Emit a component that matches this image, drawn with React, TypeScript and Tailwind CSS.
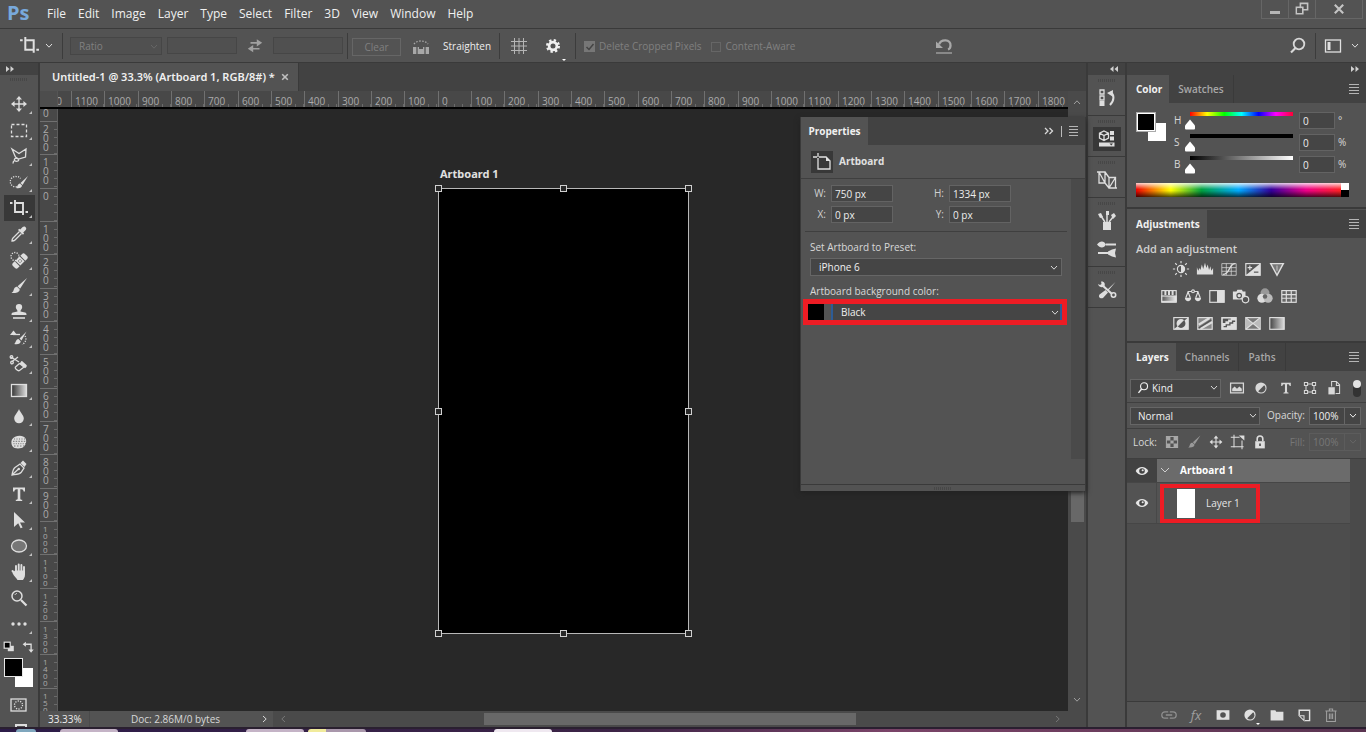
import type { ReactNode } from 'react'

const MENUS = ['File', 'Edit', 'Image', 'Layer', 'Type', 'Select', 'Filter', '3D', 'View', 'Window', 'Help']

function Icon({ children, size = 20, className = '' }: { children: ReactNode; size?: number; className?: string }) {
  return (
    <svg
      width={size}
      height={size}
      viewBox="0 0 20 20"
      fill="none"
      stroke="currentColor"
      strokeWidth="1.3"
      className={`shrink-0 ${className}`}
      aria-hidden="true"
    >
      {children}
    </svg>
  )
}

const solid = { fill: 'currentColor', stroke: 'none' }

const Chevron = ({ className = '' }: { className?: string }) => (
  <svg width="8" height="6" viewBox="0 0 8 6" fill="none" stroke="currentColor" className={`shrink-0 ${className}`} aria-hidden="true">
    <path d="M1 1l3 3.2L7 1" />
  </svg>
)

const moveShape = (
  <>
    <path d="M10 4v12M4 10h12" strokeWidth="1.4" />
    <path d="M10 2l3 3.6H7zM10 18l3-3.6H7zM2 10l3.6-3v6zM18 10l-3.6-3v6z" {...solid} />
  </>
)

const cropShape = (
  <>
    <path d="M6 2v12h8.500M7 5h7v12" strokeWidth="1.900" />
    <path d="M1 5h2.500M16.500 14H19" strokeWidth="1.900" />
  </>
)

const brushShape = (
  <>
    <path d="M18 2L8.600 10.300l2.400 2.500z" {...solid} />
    <path d="M8.200 10.800l2.500 2.600c0 2.400-3.500 4.200-8.200 3.300 2-.8 1.800-2.200 2.600-4 .6-1.300 1.900-1.900 3.100-1.900z" {...solid} />
  </>
)

const artboardShape = (
  <>
    <path d="M6 1v4M1 5h4M6 6v11h12V9l-4-4H7" />
    <path d="M14 4.500V9h4.500z" {...solid} />
  </>
)

const typeShape = (
  <path d="M4 3.500h12v4h-1.400c-.2-1.600-.8-2.300-2.300-2.300h-1v9.300c0 1 .5 1.200 1.900 1.300V17H6.800v-1.200c1.400-.1 1.900-.3 1.900-1.300V5.200h-1c-1.500 0-2.100.7-2.300 2.300H4z" {...solid} />
)

const TOOLS: { name: string; draw: ReactNode; flyout?: boolean }[] = [
  { name: 'Move', draw: moveShape },
  { name: 'Rectangular Marquee', draw: <rect x="2.500" y="4.500" width="15" height="12" strokeDasharray="3 2" /> },
  {
    name: 'Polygonal Lasso',
    draw: <path d="M3 3l7 4.500 7-4.500-.5 8-7 2-3-2zM9.500 13.500c-1-2-5-1-4 .8s5 .8 4-.8M5.500 14.500c-1 .5-1.500 1.500-1.500 3" />,
  },
  {
    name: 'Quick Selection',
    draw: (
      <>
        <path d="M10 13.500A5.200 5.200 0 117 4.500c2 0 3.500.5 4.500 2" strokeDasharray="1.200 1.300" />
        <path d="M19 4l-7.500 7 2 2z" {...solid} />
        <path d="M11 11.500l2 2c0 2-2.500 3.300-6 2.500 1.800-1 1.200-4 4-4.500z" {...solid} />
      </>
    ),
  },
  { name: 'Crop', draw: cropShape },
  {
    name: 'Eyedropper',
    draw: (
      <>
        <path d="M10.500 7.500L4 14c-.8.8-1 2-1 3 1 0 2.200-.2 3-1l6.500-6.500" />
        <path d="M9 6l1.200-1.200 1 .8 2.500-2.600c1.800-1.700 4.800.9 3 2.900l-2.500 2.600.9 1L14 10.800z" {...solid} />
      </>
    ),
  },
  {
    name: 'Spot Healing Brush',
    draw: (
      <>
        <circle cx="6" cy="6.500" r="4" strokeDasharray="1.200 1.300" />
        <g transform="rotate(-45 11 11)">
          <path d="M4.500 7.500H7v7H4.500a2 2 0 01-2-2v-3a2 2 0 012-2zM15 7.500h2.500a2 2 0 012 2v3a2 2 0 01-2 2H15z" {...solid} />
          <rect x="8" y="7.500" width="6" height="7" {...solid} />
          <path d="M9.500 9.500h1v1h-1zM11.500 9.500h1v1h-1zM9.500 11.500h1v1h-1zM11.500 11.500h1v1h-1z" fill="#535353" stroke="none" />
        </g>
      </>
    ),
  },
  { name: 'Brush', draw: brushShape },
  {
    name: 'Clone Stamp',
    draw: (
      <>
        <path d="M8.500 9.500c.3-1.200-1.700-2.300-1.700-4.200a3.200 3.200 0 016.400 0c0 1.900-2 3-1.700 4.200l4.500 1c1.200.3 1.500 1 1.500 2.500h-15c0-1.500.3-2.200 1.500-2.500z" {...solid} />
        <path d="M4 16h12" strokeWidth="1.600" />
      </>
    ),
  },
  {
    name: 'History Brush',
    draw: (
      <>
        <path d="M17.500 3.500l-7 7 2 2zM9.500 11l2.200 2.300c0 2.200-2.700 3.500-6.500 2.700 1.800-1 1.300-4.500 4.300-5z" {...solid} />
        <path d="M1 7h7L4.500 2.500z" {...solid} />
        <path d="M4 6.500h7" />
        <path d="M16 8c2 3 .5 7-3 8.500" strokeDasharray="1.200 1.300" />
      </>
    ),
  },
  {
    name: 'Background Eraser',
    draw: (
      <>
        <path d="M2 3l8 5M2.500 8L9 3" />
        <circle cx="2.500" cy="3" r="1.300" />
        <circle cx="3" cy="8.500" r="1.300" />
        <path d="M13 7l4.500 4c1 1-1 3-1.500 3.300l-5-4.500c-.5-.5 1.500-3 2-2.800z" {...solid} />
        <path d="M10.500 9.500L6.500 13c-1.200 1.200 2.500 4.500 4 3.500l4.500-3.500z" />
      </>
    ),
  },
  {
    name: 'Gradient',
    draw: (
      <>
        <defs>
          <linearGradient id="tool-gradient">
            <stop stopColor="#333" />
            <stop offset="1" stopColor="#ddd" />
          </linearGradient>
        </defs>
        <rect x="2.500" y="4.500" width="15" height="12" fill="url(#tool-gradient)" />
      </>
    ),
  },
  { name: 'Blur', draw: <path d="M10 3c1 3.200 4.800 6.200 4.800 9.500a4.800 4.800 0 01-9.600 0C5.200 9.200 9 6.200 10 3z" {...solid} /> },
  {
    name: 'Sponge',
    draw: (
      <>
        <path d="M3 7.500C5 3.500 14 2 16.500 6.500c1.800 3 0 8.500-4 9.500-3 .8-7.500.8-9.200-2-1-1.700-1.300-4.500-.3-6.500z" {...solid} />
        <g stroke="#6a6a6a" strokeWidth=".9">
          <path d="M5 7h11" strokeDasharray="1 1.500" />
          <path d="M4 9.300h13" strokeDasharray="1.500 1.200" />
          <path d="M4.500 11.700h13" strokeDasharray="1 1.300" />
          <path d="M5 14h11" strokeDasharray="1.500 1.500" />
        </g>
      </>
    ),
  },
  {
    name: 'Pen',
    draw: (
      <>
        <path d="M3 17c.5-3 1-6 3-7.500L11 6l4 4-3 4.500c-1.500 2-6 2-9 2.500zM3 17l6.500-6" />
        <path d="M11.500 5L14 2.500 17.500 6 15.500 9z" {...solid} />
        <circle cx="9.800" cy="11" r="1.200" {...solid} />
      </>
    ),
  },
  { name: 'Horizontal Type', draw: typeShape },
  { name: 'Path Selection', draw: <path d="M5 2l11 10.500h-5l2.600 5-2 .8-2.400-5L5 17z" {...solid} /> },
  { name: 'Ellipse', draw: <ellipse cx="10" cy="10" rx="7.500" ry="6" fill="#777" /> },
  {
    name: 'Hand',
    draw: (
      <>
        <path d="M7 9V4M9.700 9V2.500M12.400 9V3M15 10V5M7 13l-3.500-4" strokeWidth="1.900" strokeLinecap="round" />
        <path d="M6 8.500h10v4c0 3-1.200 4-2 5.500H8.500c-1-2-3.500-3.500-5-7z" {...solid} />
      </>
    ),
  },
  {
    name: 'Zoom',
    draw: (
      <>
        <circle cx="8" cy="8" r="5" strokeWidth="1.500" />
        <path d="M6 7c.3-1 1-1.500 2-1.500" strokeWidth="1" />
        <path d="M12 12l5.500 5.500" strokeWidth="2.200" />
      </>
    ),
    flyout: false,
  },
  {
    name: 'Edit Toolbar',
    draw: (
      <>
        <circle cx="4" cy="10" r="1.700" {...solid} />
        <circle cx="10" cy="10" r="1.700" {...solid} />
        <circle cx="16" cy="10" r="1.700" {...solid} />
      </>
    ),
  },
]

const grad = (id: string, a: string, b: string) => (
  <linearGradient id={id}>
    <stop stopColor={a} />
    <stop offset="1" stopColor={b} />
  </linearGradient>
)

const ADJUSTMENTS: { name: string; draw: ReactNode }[][] = [
  [
    {
      name: 'Brightness/Contrast',
      draw: (
        <>
          <circle cx="10" cy="10" r="4" />
          <path d="M10 6a4 4 0 010 8z" {...solid} />
          <path d="M10 1v2.500M10 16.500V19M1 10h2.500M16.500 10H19M3.600 3.600l1.800 1.800M14.600 14.600l1.800 1.800M3.600 16.400l1.800-1.800M14.600 5.400l1.800-1.800" />
        </>
      ),
    },
    { name: 'Levels', draw: <path d="M1 16V8l1.500 4L4 9l1 2 1.500-6L8 10l2-7 1.500 6 1.500-4 1.500 6L16 7l1 5 2-3v7z" {...solid} /> },
    {
      name: 'Curves',
      draw: (
        <>
          <path d="M2 4h16v13H2zM7 4v13M12.500 4v13M2 8.500h16M2 12.500h16" strokeWidth=".8" />
          <path d="M3 16c9 0 6-12 14-12" strokeWidth="1.500" />
        </>
      ),
    },
    {
      name: 'Exposure',
      draw: (
        <>
          <rect x="2" y="4" width="16" height="13" />
          <path d="M18 4v13H2z" {...solid} />
          <path d="M6.500 6v5M4 8.500h5" />
          <path d="M11 13.500h5" stroke="#535353" />
        </>
      ),
    },
    {
      name: 'Vibrance',
      draw: (
        <>
          <path d="M3 4h14l-7 13z" fill="#777" strokeWidth="1.600" />
          <path d="M10 6v6" stroke="#bbb" />
        </>
      ),
    },
  ],
  [
    {
      name: 'Hue/Saturation',
      draw: (
        <>
          <defs>{grad('adj-hue', '#555', '#eee')}</defs>
          <rect x="2" y="4" width="16" height="13" />
          <path d="M6 4v5M10 4v5M14 4v5" strokeWidth="2.200" />
          <rect x="2" y="10" width="16" height="6" fill="url(#adj-hue)" />
        </>
      ),
    },
    {
      name: 'Color Balance',
      draw: (
        <>
          <path d="M4 5h12M4.500 5.500L2 12M4.500 5.500L7 12M15.500 5.500L13 12M15.500 5.500l2.500 6.500" />
          <circle cx="10" cy="4.800" r="1.600" fill="#535353" />
          <path d="M1 12h7c0 5-7 5-7 0zM12 12h7c0 5-7 5-7 0z" {...solid} />
        </>
      ),
    },
    {
      name: 'Black & White',
      draw: (
        <>
          <rect x="2" y="4" width="16" height="13" />
          <path d="M10 4h8v13h-8z" {...solid} />
        </>
      ),
    },
    {
      name: 'Photo Filter',
      draw: (
        <>
          <path d="M1 5h4l1-2h5l1 2h3v9H1z" {...solid} />
          <circle cx="8" cy="9.500" r="2.500" stroke="#535353" />
          <circle cx="15" cy="14" r="3.600" fill="#535353" />
        </>
      ),
    },
    {
      name: 'Channel Mixer',
      draw: (
        <>
          <circle cx="10" cy="6.500" r="5" fill="#999" stroke="none" />
          <circle cx="6.500" cy="12.500" r="5" fill="#ddd" stroke="none" />
          <circle cx="13.500" cy="12.500" r="5" fill="#bbb" stroke="none" />
          <circle cx="10" cy="10.500" r="2.500" fill="#666" stroke="none" />
        </>
      ),
    },
    {
      name: 'Color Lookup',
      draw: (
        <>
          <rect x="2" y="4" width="16" height="13" fill="#666" />
          <path d="M7 4v13M12.500 4v13M2 8.500h16M2 12.500h16" />
        </>
      ),
    },
  ],
  [
    {
      name: 'Invert',
      draw: (
        <>
          <rect x="2" y="4" width="16" height="13" />
          <path d="M18 4v13H2z" {...solid} />
          <path d="M6.500 14a4.500 4.500 0 017-7z" {...solid} />
          <path d="M13.500 7a4.500 4.500 0 01-7 7z" fill="#535353" stroke="none" />
        </>
      ),
    },
    {
      name: 'Posterize',
      draw: (
        <>
          <rect x="2" y="4" width="16" height="13" fill="#888" />
          <path d="M3 12L15 4.500M5 16.500L18 9" strokeWidth="2.500" />
          <path d="M3 15.500L17 6.500" stroke="#535353" strokeWidth="1.500" />
        </>
      ),
    },
    {
      name: 'Threshold',
      draw: (
        <>
          <rect x="2" y="4" width="16" height="13" {...solid} />
          <path d="M3 5v5h3V8h3V6h3V5z" fill="#535353" stroke="none" />
          <path d="M4 14h3v-2h4v-2h3V8h3" stroke="#535353" strokeWidth="1.500" />
          <rect x="2" y="4" width="16" height="13" />
        </>
      ),
    },
    {
      name: 'Selective Color',
      draw: (
        <>
          <rect x="2" y="4" width="16" height="13" fill="#777" />
          <path d="M2 4l8 6.500L2 17zM18 4l-8 6.500 8 6.500z" fill="#bbb" stroke="none" />
          <path d="M2 4l16 13M18 4L2 17" />
        </>
      ),
    },
    {
      name: 'Gradient Map',
      draw: (
        <>
          <defs>{grad('adj-map', '#444', '#ddd')}</defs>
          <rect x="2" y="4" width="16" height="13" fill="url(#adj-map)" />
        </>
      ),
    },
  ],
]

function Burger() {
  return (
    <button type="button" aria-label="Panel menu" className="mr-[7px] ml-auto flex w-[10px] flex-col gap-px">
      <span className="h-px bg-[#b5b5b5]" />
      <span className="mt-px h-px bg-[#b5b5b5]" />
      <span className="mt-px h-px bg-[#b5b5b5]" />
      <span className="mt-px h-px bg-[#b5b5b5]" />
    </button>
  )
}

function PanelTabs({ tabs }: { tabs: string[] }) {
  return (
    <div className="flex h-7 shrink-0 items-center bg-[#424242]">
      {tabs.map((tab, i) => (
        <button
          key={tab}
          type="button"
          className={
            i === 0
              ? 'h-7 bg-[#535353] pr-[7px] pl-[9px] text-[10px] font-bold text-[#f0f0f0]'
              : 'h-7 border-r border-[#3a3a3a] px-[9px] text-[10px] font-semibold text-[#a8a8a8]'
          }
        >
          {tab}
        </button>
      ))}
      <Burger />
    </div>
  )
}

function MenuBar() {
  return (
    <header className="flex h-7 shrink-0 items-start">
      <div className="w-[47px] pl-[7px] text-[20px] leading-[26px] font-bold text-[#78a9dc]">Ps</div>
      <nav className="flex gap-3 text-[12px] leading-7 text-[#f0f0f0]">
        {MENUS.map((menu) => (
          <button key={menu} type="button">
            {menu}
          </button>
        ))}
      </nav>
      <div className="mr-[3px] ml-auto flex h-[19px] border border-t-0 border-[#666] text-[#c4c4c4]">
        <button type="button" aria-label="Minimize" className="flex w-[27px] items-center justify-center border-r border-[#666]">
          <span className="mt-1.5 h-[3px] w-[10px] bg-[#b5b5b5]" />
        </button>
        <button type="button" aria-label="Restore" className="flex w-[27px] items-center justify-center border-r border-[#666]">
          <Icon size={16}>
            <path d="M8 3h9v8h-9zM3 8h8v8H3z" strokeWidth="2" />
            <path d="M4 9h6v6H4z" fill="#535353" stroke="none" />
          </Icon>
        </button>
        <button type="button" aria-label="Close" className="flex w-[46px] items-center justify-center">
          <Icon size={14}>
            <path d="M4 4l12 12M16 4L4 16" strokeWidth="3" />
          </Icon>
        </button>
      </div>
    </header>
  )
}

const Divider = () => <span className="h-[26px] w-px shrink-0 bg-[#3c3c3c]" />

function OptionsBar() {
  return (
    <div className="flex h-[35px] shrink-0 items-center border-y border-[#3a3a3a] text-[10px] text-[#808080]">
      <button type="button" aria-label="Crop tool preset" className="ml-[19px] flex w-[43px] items-center gap-[5px] text-[#e0e0e0]">
        <Icon size={21}>{cropShape}</Icon>
        <Chevron />
      </button>
      <Divider />
      <label className="relative ml-[7px]">
        <select aria-label="Crop ratio" className="h-[18px] w-[92px] appearance-none border border-[#464646] bg-[#505050] px-2 text-[10px] leading-4">
          <option>Ratio</option>
        </select>
        <Chevron className="absolute top-[7px] right-1 text-[#666]" />
      </label>
      <input aria-label="Crop width" disabled className="ml-[5px] h-[17px] w-[70px] border border-[#464646] bg-[#505050]" />
      <button type="button" aria-label="Swap width and height" className="ml-[9px] text-[#a0a0a0]">
        <Icon size={18}>
          <path d="M5 6.500h9M6 13h9" strokeWidth="1.800" />
          <path d="M12 2.500l6 4-6 4zM8 9l-6 4 6 4z" {...solid} />
        </Icon>
      </button>
      <input aria-label="Crop height" disabled className="ml-[9px] h-[17px] w-[70px] border border-[#464646] bg-[#505050]" />
      <span className="ml-1 flex">
        <Divider />
      </span>
      <button type="button" className="mt-[2px] ml-1 h-[18px] w-[49px] border border-[#666] leading-4">Clear</button>
      <button type="button" className="mt-[2px] ml-[10px] flex items-center gap-3 text-[#ededed]">
        <Icon className="text-[#a8a8a8]">
          <path d="M2 10h16v7H2z" {...solid} />
          <path d="M6 10v7M14 10v7" stroke="#535353" />
          <path d="M8 10h4v2H8z" fill="#535353" stroke="none" />
          <path d="M3 7c3-4 11-4 14 0" strokeDasharray="1.500 1.500" />
        </Icon>
        Straighten
      </button>
      <span className="ml-2 flex">
        <Divider />
      </span>
      <button type="button" aria-label="Overlay options" className="ml-[9px] text-[#b5b5b5]">
        <Icon>
          <path d="M2 5.500h16M2 10h16M2 14.500h16M5.500 2v16M10 2v16M14.500 2v16" strokeWidth="1" />
        </Icon>
      </button>
      <button type="button" aria-label="Crop settings" className="relative ml-[15px] text-[#f0f0f0]">
        <Icon size={18}>
          <circle cx="10" cy="10" r="4.300" strokeWidth="3" />
          <circle cx="10" cy="10" r="6.300" strokeWidth="3" strokeDasharray="2.500 2.450" />
        </Icon>
        <span className="absolute -right-1 -bottom-1.5 border-x-2 border-t-2 border-x-transparent border-t-white" />
      </button>
      <span className="ml-[13px] flex">
        <Divider />
      </span>
      <label className="mt-[2px] ml-2 flex items-center gap-1">
        <input type="checkbox" defaultChecked className="peer sr-only" />
        <span className="flex h-[11px] w-[11px] items-center justify-center bg-[#777] text-[#444]">
          <Icon size={10}>
            <path d="M3 10l5 5 9-11" strokeWidth="3" />
          </Icon>
        </span>
        Delete Cropped Pixels
      </label>
      <label className="mt-[2px] ml-[9px] flex items-center gap-[5px]">
        <input type="checkbox" className="h-[10px] w-[10px] appearance-none border border-[#666]" />
        Content-Aware
      </label>
      <button type="button" aria-label="Reset crop" className="ml-[139px] text-[#a8a8a8]">
        <Icon>
          <path d="M5 8.500C7 2.500 17 3 16.500 9.500c0 2-1 3.500-2.500 4" strokeWidth="2.300" />
          <path d="M2 5.500v6.500h7z" {...solid} />
          <path d="M2 17h16" />
        </Icon>
      </button>
      <button type="button" aria-label="Search" className="ml-auto text-[#d8d8d8]">
        <Icon>
          <circle cx="11" cy="8" r="5.300" strokeWidth="1.800" />
          <path d="M7.500 12L3 16.500" strokeWidth="2.200" />
        </Icon>
      </button>
      <span className="mr-[7px] ml-[7px] flex">
        <Divider />
      </span>
      <button type="button" aria-label="Workspace" className="mr-[7px] flex items-center gap-2 text-[#e0e0e0]">
        <Icon>
          <rect x="2.500" y="4" width="15" height="12" />
          <path d="M4.500 6h3v8h-3z" {...solid} />
        </Icon>
        <Chevron />
      </button>
    </div>
  )
}

const DoubleArrow = ({ left = false }: { left?: boolean }) => (
  <svg width="8" height="6" viewBox="0 0 8 6" fill="#d0d0d0" aria-hidden="true">
    {left ? <path d="M3.500 0v6L0 3zM8 0v6L4.500 3z" /> : <path d="M0 0v6l3.500-3zM4.500 0v6L8 3z" />}
  </svg>
)

const Grip = () => <div className="h-[3px] w-[18px] shrink-0 bg-[repeating-linear-gradient(90deg,#474747_0_1px,#535353_1px_2px)]" />

function Toolbar() {
  return (
    <aside className="flex w-10 shrink-0 flex-col overflow-hidden border-r-2 border-[#3a3a3a]">
      <div className="flex h-3 shrink-0 items-center bg-[#424242] pl-[6px]">
        <DoubleArrow />
      </div>
      <div className="flex h-4 shrink-0 justify-center pt-[3px]">
        <Grip />
      </div>
      {TOOLS.map((tool) => (
        <button
          key={tool.name}
          type="button"
          aria-label={tool.name}
          className={`relative ml-1 flex h-[26px] w-[31px] shrink-0 items-center justify-center pr-px text-[#dedede] ${tool.name === 'Crop' ? 'bg-[#383838]' : ''}`}
        >
          <Icon size={20}>{tool.draw}</Icon>
          {tool.flyout !== false && (
            <span className="absolute right-[3px] bottom-[3px] border-b-3 border-l-3 border-b-[#c0c0c0] border-l-transparent" />
          )}
        </button>
      ))}
      <div className="mx-[3px] flex h-5 shrink-0 items-center justify-between text-[#dedede]">
        <Icon size={12}>
          <rect x="8" y="8" width="10" height="9" {...solid} />
          <rect x="2" y="2" width="10" height="10" fill="#000" strokeWidth="2" />
        </Icon>
        <Icon size={13}>
          <path d="M5 5h9v9" strokeWidth="2" />
          <path d="M6 1v8L1 5zM10 13h8l-4 5z" {...solid} />
        </Icon>
      </div>
      <div className="relative mt-[1px] h-[32px] shrink-0">
        <button type="button" aria-label="Background color" className="absolute top-2.5 left-[15px] h-[19px] w-[18px] bg-white" />
        <button type="button" aria-label="Foreground color" className="absolute top-0 left-1 h-[19px] w-[19px] border border-[#e8e8e8] bg-black" />
      </div>
      <button type="button" aria-label="Quick mask" className="ml-[9px] shrink-0 pt-[5px] text-[#dedede]">
        <Icon>
          <rect x="2" y="4" width="15" height="12" />
          <circle cx="9.500" cy="10" r="4" strokeDasharray="1.200 1.300" />
        </Icon>
      </button>
      <button type="button" aria-label="Screen mode" className="mt-[9px] ml-[15px] h-3 w-[12px] shrink-0 border-2 border-[#dedede]" />
    </aside>
  )
}

// one hundred document pixels are a third of a hundred on screen
const step = (i: number) => Math.round(((i + 1) * 100) / 3) - Math.round((i * 100) / 3)

function HorizontalRuler() {
  return (
    <div className="flex h-[18px] shrink-0 overflow-hidden border-b-2 border-black bg-[#484848] text-[10px] leading-[20px] text-[#ababab]">
      <span className="w-[18px] shrink-0 border-r border-[#555] bg-[#4d4d4d]" />
      <span className="flex w-[13px] shrink-0 justify-end overflow-hidden pr-[9px]">1200</span>
      {Array.from({ length: 30 }, (_, i) => (
        <span key={i} className="relative shrink-0 border-l border-[#707070] pl-[3px]" style={{ width: step(i) }}>
          {Math.abs(i - 11) * 100}
          <span className="absolute inset-x-0 bottom-0 h-[3px] bg-[repeating-linear-gradient(90deg,transparent_0_7px,#6a6a6a_7px_8px)]" />
        </span>
      ))}
    </div>
  )
}

function VerticalRuler() {
  return (
    <div className="flex w-[18px] shrink-0 flex-col overflow-hidden border-r border-[#5c5c5c] bg-[#484848] text-[#ababab]">
      <span className="h-3 shrink-0 pl-[3px] text-[10px] leading-[8px]">0</span>
      {Array.from({ length: 18 }, (_, i) => {
        const label = String(Math.abs(i - 2) * 100)
        return (
          <span key={i} className="relative shrink-0 border-t border-[#707070] pt-[3px] pl-[3px]" style={{ height: step(i) }}>
            <span className={label.length > 3 ? 'block w-[7px] text-[8px] leading-[7px] break-all' : 'block w-[7px] text-[10px] leading-[9px] break-all'}>
              {label}
            </span>
            <span className="absolute inset-y-0 right-0 w-[3px] bg-[repeating-linear-gradient(180deg,transparent_0_7px,#6a6a6a_7px_8px)]" />
          </span>
        )
      })}
    </div>
  )
}

const HANDLES = [
  '-left-[4px] -top-[4px]',
  'left-[121px] -top-[4px]',
  '-right-[4px] -top-[4px]',
  '-left-[4px] top-[219px]',
  '-right-[4px] top-[219px]',
  '-left-[4px] -bottom-[4px]',
  'left-[121px] -bottom-[4px]',
  '-right-[4px] -bottom-[4px]',
]

function NumberField({ label, value }: { label: string; value: string }) {
  return (
    <label className="flex w-[118px] items-center">
      <span className="w-[17px] text-right text-[#d0d0d0]">{label}</span>
      <input defaultValue={value} className="ml-[5px] h-[17px] w-[62px] border border-[#636363] bg-[#454545] px-[3px] text-[10px] text-[#ededed]" />
    </label>
  )
}

function PropertiesPanel() {
  return (
    <section className="absolute top-2 right-0 flex h-[374px] w-[286px] flex-col border-r border-l border-[#3a3a3a] bg-[#535353] text-[10px] text-[#d8d8d8] shadow-[0_2px_5px_#222]">
      <div className="flex h-7 shrink-0 items-center bg-[#424242]">
        <button type="button" className="h-7 w-[67px] bg-[#535353] font-bold text-[#f0f0f0]">Properties</button>
        <button type="button" aria-label="Collapse panel" className="mr-[7px] ml-auto text-[#d8d8d8]">
          <svg width="10" height="8" viewBox="0 0 10 8" fill="none" stroke="currentColor" strokeWidth="1.300">
            <path d="M1 1l3 3-3 3M5.500 1l3 3-3 3" />
          </svg>
        </button>
        <span className="mr-[7px] h-[11px] w-px bg-[#bbb]" />
        <span className="flex w-[16px]">
          <Burger />
        </span>
      </div>
      <div className="flex h-[34px] shrink-0 items-center gap-[6px] border-b border-[#3f3f3f] pl-[10px] font-bold text-[#e0e0e0]">
        <span className="flex h-[22px] w-[22px] items-center justify-center bg-[#383838]">
          <Icon>{artboardShape}</Icon>
        </span>
        Artboard
      </div>
      <div className="flex min-h-0 flex-1">
        <div className="flex-1 px-1">
          <div className="grid grid-cols-[118px_118px] gap-y-1 border-b border-[#3f3f3f] pt-[6px] pb-[8px] pl-[4px]">
            <NumberField label="W:" value="750 px" />
            <NumberField label="H:" value="1334 px" />
            <NumberField label="X:" value="0 px" />
            <NumberField label="Y:" value="0 px" />
          </div>
          <label className="block pt-[7px] pl-[5px]">
            <span className="block leading-4">Set Artboard to Preset:</span>
            <span className="relative mt-[3px] block">
              <select className="h-[18px] w-[252px] appearance-none border border-[#666] bg-[#454545] px-2 text-[10px] leading-4 text-[#f0f0f0]">
                <option>iPhone 6</option>
              </select>
              <Chevron className="absolute top-[7px] left-[240px]" />
            </span>
          </label>
          <div className="pt-[7px]">
            <label htmlFor="artboard-bg" className="block pl-[5px] leading-4">Artboard background color:</label>
            <div className="relative -ml-[2px] flex h-[26px] w-[264px] items-center border-5 border-[#ed1c24] bg-[#535353]">
              <span className="h-4 w-[16px] bg-black" />
              <select id="artboard-bg" className="ml-[7px] h-4 flex-1 appearance-none border-x-2 border-[#2d5c96] bg-[#454545] px-[8px] text-[10px] leading-4 text-[#f0f0f0]">
                <option>Black</option>
              </select>
              <Chevron className="absolute top-[6px] right-[3px]" />
            </div>
          </div>
        </div>
        <div className="mb-[25px] w-[14px] shrink-0 bg-[#4a4a4a]" />
      </div>
      <div className="flex h-[7px] shrink-0 items-center justify-center border-t border-[#3a3a3a]">
        <Grip />
      </div>
    </section>
  )
}

function Document() {
  return (
    <main className="flex min-w-0 flex-1 flex-col">
      <div className="flex h-7 shrink-0 bg-[#424242]">
        <div className="flex items-center gap-[6px] border-r border-[#3a3a3a] bg-[#535353] pr-[9px] pl-3 font-['Noto_Sans',sans-serif] text-[11px] font-semibold text-[#f0f0f0]">
          Untitled-1 @ 33.3% (Artboard 1, RGB/8#) *
          <button type="button" aria-label="Close document" className="text-[#c0c0c0]">
            <Icon size={8}>
              <path d="M3 3l14 14M17 3L3 17" strokeWidth="4" />
            </Icon>
          </button>
        </div>
      </div>
      <div className="relative flex min-h-0 flex-1">
        <div className="flex min-w-0 flex-1 flex-col">
          <HorizontalRuler />
          <div className="flex min-h-0 flex-1">
            <VerticalRuler />
            <div className="relative min-w-0 flex-1 overflow-hidden bg-[#282828]">
              <span className="absolute top-[57px] left-[382px] font-['Noto_Sans',sans-serif] text-[11px] font-bold text-[#e0e0e0]">Artboard 1</span>
              <div className="absolute top-[79px] left-[380px] h-[446px] w-[251px] border border-[#b8b8b8] bg-black">
                {HANDLES.map((place) => (
                  <span key={place} className={`absolute h-[7px] w-[7px] border border-[#d0d0d0] bg-[#282828] ${place}`} />
                ))}
              </div>
            </div>
          </div>
        </div>
        <div className="flex w-[18px] shrink-0 flex-col items-center bg-[#4a4a4a] py-2 text-[#a0a0a0]">
          <Chevron className="rotate-180" />
          <span className="mt-[386px] h-[31px] w-[13px] bg-[#686868]" />
          <Chevron className="mt-auto" />
        </div>
        <div className="absolute inset-x-0 top-[18px]">
          <PropertiesPanel />
        </div>
      </div>
      <footer className="flex h-4 shrink-0 items-center bg-[#4a4a4a] text-[10px] text-[#d8d8d8]">
        <span className="w-[49px] bg-[#535353] pl-[8px] leading-4 text-[#ededed]">33.33%</span>
        <button type="button" className="ml-[1px] flex h-4 w-[183px] items-center bg-[#535353] pr-1">
          <span className="flex-1 text-center">Doc: 2.86M/0 bytes</span>
          <Chevron className="-rotate-90" />
        </button>
        <Chevron className="ml-[6px] rotate-90 text-[#777]" />
        <span className="flex flex-1 pl-[197px]">
          <span className="h-3 w-[372px] bg-[#686868]" />
        </span>
        <Chevron className="mr-[24px] -rotate-90 text-[#777]" />
      </footer>
    </main>
  )
}

function DockButton({ label, active = false, children }: { label: string; active?: boolean; children: ReactNode }) {
  return (
    <button type="button" aria-label={label} className={`flex h-[24px] w-[28px] items-center justify-center ${active ? 'bg-[#383838]' : ''}`}>
      <Icon size={20}>{children}</Icon>
    </button>
  )
}

function Dock() {
  const group = 'flex flex-col items-center border-b border-[#3a3a3a] pt-1'
  return (
    <aside className="flex w-[41px] shrink-0 flex-col border-x-2 border-[#3a3a3a] text-[#dedede]">
      <div className="flex h-3 shrink-0 items-center justify-end bg-[#424242] pr-[7px]">
        <DoubleArrow left />
      </div>
      <div className={`${group} h-[41px] gap-1`}>
        <Grip />
        <DockButton label="History">
          <path d="M3 2h4v4H3zM3 8h4v4H3z" />
          <path d="M2.500 13h5v5h-5z" {...solid} />
          <path d="M13.500 4.500c4 2 4 8-.5 12.500" strokeWidth="2" />
          <path d="M10 5l6-3-.5 6.500z" {...solid} />
        </DockButton>
      </div>
      <div className={`${group} h-[41px] gap-1`}>
        <Grip />
        <DockButton label="Properties" active>
          <path d="M7 2l4.500 2.200v5L7 11.500 2.500 9.200v-5zM2.500 4.200L7 6.500l4.500-2.300M7 6.500v5" />
          <path d="M13 2h4v4h-4zM13 7.500h4v4h-4zM2 13.500h15.500v4H2z" {...solid} />
          <path d="M12.500 14.500h3.500l-1.750 2z" fill="#383838" stroke="none" />
        </DockButton>
      </div>
      <div className={`${group} h-[41px] gap-1`}>
        <Grip />
        <DockButton label="Layer Comps">
          <path d="M2 2h6v11H2zM12 7.500h6.500V18H12zM2 2l6 11M8 2l4 5.500M8 13l4 5M12 18l6.500-10.500M0 2h2M18.500 18H20" />
        </DockButton>
      </div>
      <div className={`${group} h-[69px] gap-1`}>
        <Grip />
        <DockButton label="Brush Presets">
          <path d="M6 11h8v8H6z" {...solid} />
          <path d="M8 11L4 5M10 11V3M12 11l4-5" strokeWidth="1.500" />
          <path d="M1 3l3-1 2 4-3 1zM9 0h3v4H9zM14 4l3-2 2 3-3 3z" {...solid} />
        </DockButton>
        <DockButton label="Brush Settings">
          <path d="M9 5.500h10M1 14h10" strokeWidth="1.800" />
          <path d="M0 5.500c3-4 7-4 9 0-2 4-6 4-9 0zM11 12.500l4-2 4-1-1 4.500 1 4.500-4-1-4-2z" {...solid} />
        </DockButton>
      </div>
      <div className={`${group} h-[41px] gap-1`}>
        <Grip />
        <DockButton label="Tool Presets">
          <path d="M5 5l10 9" strokeWidth="2.200" />
          <circle cx="16.500" cy="15" r="2.200" strokeWidth="1.600" />
          <path d="M1 4l2 1 1.500-1L4 1.500c3-.5 4.500 2 3.500 4.500-1.500 2-5.500 1.500-6.500-2z" {...solid} />
          <path d="M18.500 2l-8.500 8 1 1zM8.500 10l2.500 2.500-5 5.500c-3 1-5-1-3.500-3.500z" {...solid} />
        </DockButton>
      </div>
    </aside>
  )
}

const SLIDERS = [
  { label: 'H', unit: '°', track: 'bg-[linear-gradient(90deg,#f00,#ff0,#0f0,#0ff,#00f,#f0f,#f03)]' },
  { label: 'S', unit: '%', track: 'bg-black' },
  { label: 'B', unit: '%', track: 'bg-[linear-gradient(90deg,#000,#fff)]' },
]

function ColorPanel() {
  return (
    <section className="border-b-2 border-[#3a3a3a]">
      <PanelTabs tabs={['Color', 'Swatches']} />
      <div className="flex pt-[9px] pr-[17px] pl-[9px]">
        <div className="relative h-8 w-[31px]">
          <button type="button" aria-label="Background color" className="absolute top-[11px] left-[12px] h-[18px] w-[18px] bg-white" />
          <button type="button" aria-label="Foreground color" className="absolute top-0 left-0 h-5 w-5 border border-[#aaa] bg-black outline-1 -outline-offset-2 outline-white" />
        </div>
        <div className="flex flex-1 flex-col text-[10px] text-[#d8d8d8]">
          {SLIDERS.map((s) => (
            <div key={s.label} className="flex h-[22px]">
              <label htmlFor={`slider-${s.label}`} className="w-[23px] pl-[7px] leading-[17px]">{s.label}</label>
              <span className="relative flex-1">
                <span className={`block h-1 ${s.track}`} />
                <input id={`slider-${s.label}`} type="range" defaultValue={0} className="absolute inset-0 w-full opacity-0" />
                <svg width="12" height="11" viewBox="0 0 12 11" className="absolute top-[7px] -left-[6px]" aria-hidden="true">
                  <path d="M6 .5l5 6v3q0 1-1 1H2q-1 0-1-1v-3z" fill="#fff" />
                </svg>
              </span>
              <input aria-label={`${s.label} value`} defaultValue="0" className="ml-[6px] h-[17px] w-[36px] border border-[#636363] bg-[#454545] px-[3px] text-[10px] text-[#ededed]" />
              <span className="w-[14px] pl-[3px] leading-[17px]">{s.unit}</span>
            </div>
          ))}
        </div>
      </div>
      <div className="mt-[5px] mr-[17px] mb-[10px] ml-[9px] flex h-[14px]">
        <div className="flex-1 bg-[linear-gradient(180deg,#ffffffd0,#ffffff00_45%,#00000000_55%,#000000b0),linear-gradient(90deg,#e00,#ff0_17%,#00a040_32%,#0af_50%,#309_66%,#e08_83%,#f22)]" />
        <div className="flex w-2 flex-col">
          <span className="flex-1 bg-white" />
          <span className="flex-1 bg-black" />
        </div>
      </div>
    </section>
  )
}

function AdjustmentsPanel() {
  return (
    <section className="border-b-2 border-[#3a3a3a] pt-px pb-[5px]">
      <PanelTabs tabs={['Adjustments']} />
      <h2 className="pt-1 pl-[9px] text-[11px] leading-[13px] font-semibold text-[#d0d0d0]">Add an adjustment</h2>
      <div className="mr-[35px] flex flex-col text-[#dedede]">
        {ADJUSTMENTS.map((row, r) => (
          <div key={r} className="flex h-[27px] items-center justify-center gap-[6px]">
            {row.map((item) => (
              <button key={item.name} type="button" aria-label={item.name}>
                <Icon size={18}>{item.draw}</Icon>
              </button>
            ))}
          </div>
        ))}
      </div>
    </section>
  )
}

const Eye = () => (
  <Icon size={14}>
    <path d="M1 10c4-7.500 14-7.500 18 0-4 7.500-14 7.500-18 0z" {...solid} />
    <circle cx="10" cy="10" r="4" fill="#444" stroke="none" />
    <circle cx="11" cy="9" r="1.500" {...solid} />
  </Icon>
)

function IconButton({ label, size = 16, className = '', children }: { label: string; size?: number; className?: string; children: ReactNode }) {
  return (
    <button type="button" aria-label={label} className={className}>
      <Icon size={size}>{children}</Icon>
    </button>
  )
}

const halfCircle = (
  <>
    <circle cx="10" cy="10" r="7" {...solid} />
    <path d="M14 6.500a5.300 5.300 0 01-7.500 7.500z" fill="#535353" stroke="none" />
  </>
)

function LayersPanel() {
  const field = 'border border-[#666] bg-[#454545] text-[#f0f0f0]'
  return (
    <section className="flex min-h-0 flex-1 flex-col text-[10px] text-[#d8d8d8]">
      <PanelTabs tabs={['Layers', 'Channels', 'Paths']} />
      <div className="flex h-[32px] shrink-0 items-center border-b border-[#3f3f3f] pt-[3px] pl-[3px]">
        <label className="relative flex items-center">
          <Icon size={14} className="pointer-events-none absolute left-[6px] text-[#f0f0f0]">
            <circle cx="11.500" cy="7.500" r="5" strokeWidth="1.600" />
            <path d="M8 11.500L3.500 17" strokeWidth="2" />
          </Icon>
          <select aria-label="Filter kind" className={`h-[19px] w-[91px] appearance-none pl-[21px] text-[10px] leading-4 ${field}`}>
            <option>Kind</option>
          </select>
          <Chevron className="absolute right-[3px]" />
        </label>
        <div className="flex flex-1 items-center justify-between pr-[11px] pl-[8px]">
          <IconButton label="Pixel layers">
            <path d="M2 4h16v12H2z" strokeWidth="1.600" />
            <path d="M4 14V11l3-3 3 3 3-3 3 3v3z" {...solid} />
          </IconButton>
          <IconButton label="Adjustment layers">{halfCircle}</IconButton>
          <IconButton label="Type layers">{typeShape}</IconButton>
          <IconButton label="Shape layers">
            <path d="M5 5h10v10H5z" />
            <path d="M3 3h4v4H3zM13 3h4v4h-4zM3 13h4v4H3zM13 13h4v4h-4z" fill="#535353" />
          </IconButton>
          <IconButton label="Smart objects">
            <path d="M7 8V2h6l4 4v11h-5M13 2v5h4" />
            <path d="M3 9h8v9H3z" {...solid} />
          </IconButton>
        </div>
        <button type="button" aria-label="Layer filtering" className="mr-[5px] flex h-[17px] w-[8px] items-start rounded-sm bg-[#333]">
          <span className="block h-2 w-2 rounded-full bg-[#e4e4e4]" />
        </button>
      </div>
      <div className="flex h-[26px] shrink-0 items-center border-b border-[#3f3f3f] pl-[3px]">
        <label className="relative flex flex-1 items-center">
          <select aria-label="Blend mode" className={`h-[18px] w-full appearance-none px-[7px] text-[10px] leading-4 ${field}`}>
            <option>Normal</option>
          </select>
          <Chevron className="absolute right-[3px]" />
        </label>
        <label className="ml-[7px] flex items-center gap-1">
          Opacity:
          <input defaultValue="100%" className={`h-[18px] w-[36px] px-[3px] text-[10px] ${field}`} />
        </label>
        <button type="button" aria-label="Opacity slider" className={`mr-[5px] flex h-[18px] w-[16px] items-center justify-center border-l-0 ${field}`}>
          <Chevron />
        </button>
      </div>
      <div className="flex h-[30px] shrink-0 items-center border-b border-[#3f3f3f] pb-[3px] pl-[6px]">
        Lock:
        <div className="ml-[7px] flex gap-[6px] text-[#dedede]">
          <IconButton label="Lock transparent pixels" className="text-[#a8a8a8]">
            <path d="M3 3h14v14H3z" />
            <path d="M3 3h5v5H3zM12 3h5v5h-5zM8 8h4v4H8zM3 12h5v5H3zM12 12h5v5h-5z" {...solid} />
          </IconButton>
          <IconButton label="Lock image pixels" className="text-[#999]">{brushShape}</IconButton>
          <IconButton label="Lock position">{moveShape}</IconButton>
          <IconButton label="Lock artboard nesting">
            <path d="M5 1v16M1 4h11M1 16h16M15 8v11" />
            <path d="M11 2l7 6V2z" {...solid} />
          </IconButton>
          <IconButton label="Lock all">
            <path d="M4 9h12v9H4z" {...solid} />
            <path d="M6.500 9V6a3.500 3.500 0 017 0v3" strokeWidth="2" />
            <path d="M10 12v3" stroke="#444" strokeWidth="2" />
          </IconButton>
        </div>
        <label className="ml-auto flex items-center gap-1 text-[#777]">
          Fill:
          <input defaultValue="100%" disabled className="h-[18px] w-[36px] border border-[#5c5c5c] px-[3px] text-[10px]" />
        </label>
        <button type="button" aria-label="Fill slider" disabled className="mr-[5px] flex h-[18px] w-[16px] items-center justify-center border border-l-0 border-[#5c5c5c] text-[#666]">
          <Chevron />
        </button>
      </div>
      <div className="flex min-h-0 flex-1 bg-[#4d4d4d]">
        <ul className="flex-1">
          <li className="flex h-6 border-b border-[#464646]">
            <button type="button" aria-label="Toggle Artboard 1" className="flex w-[30px] items-center justify-center bg-[#424242] text-[#e6e6e6]">
              <Eye />
            </button>
            <div className="flex flex-1 items-center gap-[10px] bg-[#6b6b6b] pl-[3px] font-bold text-white">
              <svg width="10" height="7" viewBox="0 0 10 7" fill="none" stroke="#d0d0d0" aria-hidden="true">
                <path d="M1 1l4 4 4-4" />
              </svg>
              Artboard 1
            </div>
          </li>
          <li className="flex h-[41px] border-b border-[#464646] bg-[#535353]">
            <button type="button" aria-label="Toggle Layer 1" className="flex w-[30px] items-center justify-center border-r border-[#484848] text-[#e6e6e6]">
              <Eye />
            </button>
            <div className="ml-[3px] flex h-[39px] w-[100px] items-center gap-[11px] self-center border-4 border-[#ed1c24] pl-[13px] text-[#e6e6e6]">
              <span className="h-[29px] w-[18px] bg-white" />
              Layer 1
            </div>
          </li>
        </ul>
        <div className="w-4 shrink-0 bg-[#4a4a4a]" />
      </div>
      <div className="flex h-[26px] shrink-0 items-center gap-[11px] border-t border-[#3a3a3a] pl-[34px] text-[#e0e0e0]">
        <IconButton label="Link layers" className="text-[#909090]">
          <path d="M9 6H5a4 4 0 000 8h4M11 6h4a4 4 0 010 8h-4M6 10h8" strokeWidth="1.600" />
        </IconButton>
        <button type="button" aria-label="Layer style" className="w-4 text-center text-[13px] leading-4 text-[#a0a0a0] italic">fx</button>
        <IconButton label="Add mask">
          <path d="M2 4h16v12H2z" {...solid} />
          <circle cx="10" cy="10" r="3.500" fill="#535353" stroke="none" />
        </IconButton>
        <span className="relative flex">
          <IconButton label="New adjustment layer">{halfCircle}</IconButton>
          <span className="absolute -right-[2px] -bottom-[2px] border-x-2 border-t-2 border-x-transparent border-t-white" />
        </span>
        <IconButton label="New group">
          <path d="M2 4h6l1 2h9v11H2z" {...solid} />
        </IconButton>
        <IconButton label="New layer">
          <path d="M4 10V4h13v13h-6" strokeWidth="1.800" />
          <path d="M4 11h6v6z" />
        </IconButton>
        <IconButton label="Delete layer" className="text-[#a0a0a0]">
          <path d="M3 5h14M8 5V2.500h4V5M4.500 5v13h11V5M8 8v7M10 8v7M12 8v7" />
        </IconButton>
      </div>
    </section>
  )
}

function Taskbar() {
  return (
    <div className="flex h-[5px] shrink-0 overflow-hidden border-t-2 border-[#2a2030] bg-[linear-gradient(90deg,#2c1c48,#3c2446_45%,#7a4468_65%,#5a3450)]">
      <span className="ml-4 w-5 rounded-t-full bg-[#7fa6bd]" />
      <span className="ml-6 w-[58px] rounded-t-sm bg-[#c4b3c6]" />
      <span className="ml-[128px] w-[58px] rounded-t-sm bg-[#c4b3c6]" />
      <span className="ml-1 w-[18px] rounded-tl-sm bg-[#f1eb9c]" />
      <span className="w-10 rounded-tr-sm bg-[#a997ab]" />
      <span className="ml-[128px] w-[58px] rounded-t-sm bg-[#efe8f0]" />
    </div>
  )
}

export default function App() {
  return (
    <div className="flex h-screen flex-col overflow-hidden bg-[#535353] font-['Open_Sans','Noto_Sans',sans-serif]">
      <MenuBar />
      <OptionsBar />
      <div className="flex min-h-0 flex-1">
        <Toolbar />
        <Document />
        <Dock />
        <aside className="flex w-[239px] shrink-0 flex-col">
          <div className="flex h-3 shrink-0 items-center justify-end bg-[#424242] pr-[7px]">
            <DoubleArrow />
          </div>
          <ColorPanel />
          <AdjustmentsPanel />
          <LayersPanel />
        </aside>
      </div>
      <Taskbar />
    </div>
  )
}
